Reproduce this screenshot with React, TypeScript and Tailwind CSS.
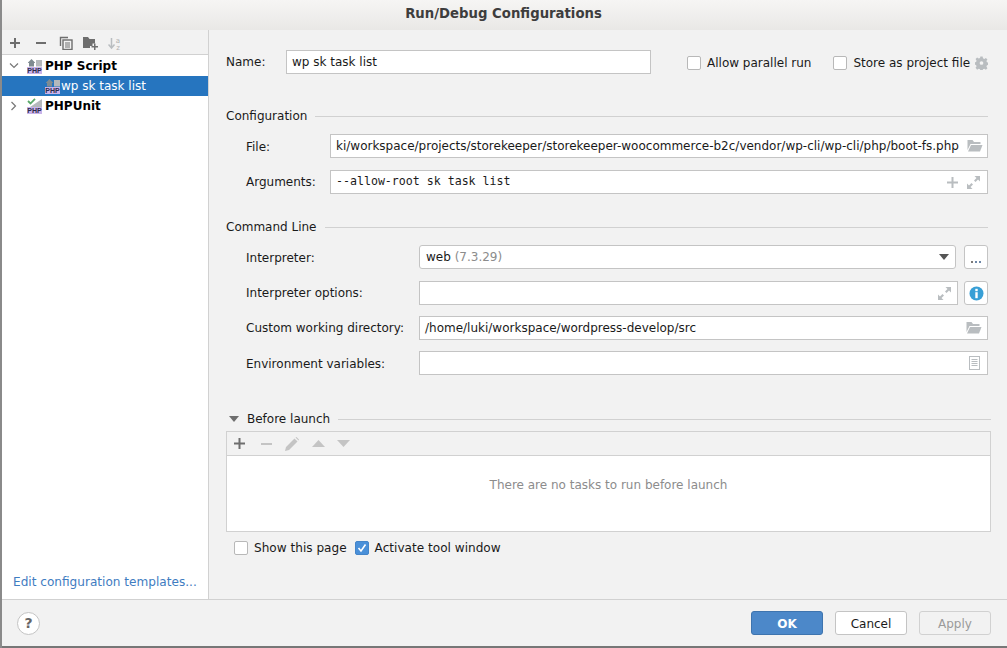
import React from "react";

const Php = ({ check }: { check?: boolean }) => (
  <svg width="16" height="16" viewBox="0 0 16 16" className="shrink-0">
    {check ? (
      <>
        <path d="M3 9 L15 1 V9 Z" fill="#b4b8bb" />
        <path d="M1 3 L3.5 5.5 L8 .8" fill="none" stroke="#59a869" strokeWidth="1.8" />
      </>
    ) : (
      <>
        <path d="M1 4.5 L4.5 1 L8 4.5 V5 H7 V8.5 H2 V5 H1 Z" fill="#7f8b91" />
        <rect x="9" y="2" width="6" height="6.5" fill="#b4b8bb" />
      </>
    )}
    <rect x="0" y="9" width="15" height="7" fill="#c9b3ea" />
    <text x="7.5" y="15" textAnchor="middle" fontSize="7" fontWeight="700" fill="#2b2b4a" fontFamily="Liberation Sans, sans-serif">PHP</text>
  </svg>
);

const Check = ({ on, label, className = "" }: { on?: boolean; label: string; className?: string }) => (
  <div className={"flex items-center gap-[6px] whitespace-nowrap shrink-0 " + className}>
    {on ? (
      <div className="w-[14px] h-[14px] rounded-[2px] bg-[#4a90d9] border border-[#4485c9] flex items-center justify-center">
        <svg width="10" height="10" viewBox="0 0 10 10"><path d="M1.5 5 L4 8 L8.5 1.5" fill="none" stroke="#fff" strokeWidth="1.6" /></svg>
      </div>
    ) : (
      <div className="w-[14px] h-[14px] rounded-[2px] bg-white border border-[#b8b8b8]" />
    )}
    <span>{label}</span>
  </div>
);

const Folder = () => (
  <svg width="16" height="12" viewBox="0 0 15 12" className="shrink-0">
    <path d="M0 0 H5 L6.5 2 H13 V4 H3 L0 10 Z" fill="#b9bdc0" />
    <path d="M3.5 5 H15 L12.5 11.5 H0.5 Z" fill="#b9bdc0" />
  </svg>
);

const Expand = () => (
  <svg width="13" height="13" viewBox="0 0 13 13" fill="#b9bdc0" className="shrink-0">
    <path d="M7.5 0 H13 V5.5 L11 3.5 L8.5 6 L7 4.5 L9.5 2 Z" />
    <path d="M0 7.5 V13 H5.5 L3.5 11 L6 8.5 L4.5 7 L2 9.5 Z" />
  </svg>
);

const Field = ({ children, className = "" }: { children?: React.ReactNode; className?: string }) => (
  <div className={"h-[24px] shrink-0 bg-white border border-[#c4c4c4] flex items-center px-[5px] whitespace-nowrap overflow-hidden " + className}>{children}</div>
);

const Section = ({ title }: { title: string }) => (
  <div className="flex items-center h-[18px]">
    <span>{title}</span>
    <div className="flex-1 h-px bg-[#d1d1d1] ml-[8px]" />
  </div>
);

const Row = ({ label, children, className = "", low }: { label: string; children: React.ReactNode; className?: string; low?: boolean }) => (
  <div className={"flex items-center pl-[20px] h-[24px] " + className}>
    <span className={low ? "w-[173px] shrink-0 pt-[2px]" : "w-[173px] shrink-0"}>{label}</span>
    {children}
  </div>
);

export default function App() {
  return (
    <div className="w-[1007px] h-[648px] flex flex-col overflow-hidden bg-[#f2f2f2] text-[#1a1a1a] text-[12px] border-l-2 border-[#8a8a8a]" style={{ fontFamily: '"DejaVu Sans", sans-serif' }}>
      <div className="h-[30px] shrink-0 flex items-center justify-center pb-[2px] font-bold text-[13.25px] text-[#3d3d3d] bg-gradient-to-b from-[#f6f5f4] to-[#e9e8e6] -ml-[2px]">Run/Debug Configurations</div>
      <div className="h-[569px] shrink-0 flex">
        <aside className="w-[207px] shrink-0 border-r border-[#d1d1d1] flex flex-col">
          <div className="h-[25px] shrink-0 flex items-center gap-[10px] pl-[7px] pt-[2px] text-[#6e6e6e] border-b border-[#d1d1d1]">
            <svg width="12" height="12" viewBox="0 0 12 12" fill="#6e6e6e"><path d="M5 1h2v4h4v2H7v4H5V7H1V5h4z" /></svg>
            <svg width="12" height="12" viewBox="0 0 12 12" fill="#6e6e6e" className="ml-[4px]"><rect x="1" y="5" width="10" height="2" /></svg>
            <svg width="14" height="14" viewBox="0 0 14 14" className="ml-[2px]" fill="none" stroke="#6e6e6e"><path d="M1.5 10V1.5H9" strokeWidth="1.4" /><rect x="4" y="4" width="9" height="9.5" strokeWidth="1.4" /><path d="M6 7h5M6 9h5M6 11h5" /></svg>
            <svg width="16" height="14" viewBox="0 0 16 14" fill="#6e6e6e"><path d="M0 1h5l1.5 2H12v4.5H9.5V10H7v2H0z" /><path d="M11 7.5h1.5V10H15v1.5h-2.5V14H11v-2.5H8.5V10H11z" /></svg>
            <svg width="14" height="15" viewBox="0 0 14 15" className="-ml-[1px]"><path d="M3.5 2v9M0.5 8.5 L3.5 12 L6.5 8.5" fill="none" stroke="#b9bdc0" strokeWidth="1.5" /><text x="10" y="6.5" fontSize="7" textAnchor="middle" fill="#b0b0b0">a</text><text x="10" y="14" fontSize="7" textAnchor="middle" fill="#b0b0b0">z</text></svg>
          </div>
          <div className="flex-1 bg-white flex flex-col pt-[1px]">
            <div className="h-[20px] flex items-center font-bold text-black">
              <svg width="10" height="8" viewBox="0 0 10 8" className="ml-[7px] mr-[8px]"><path d="M1 1.5 L5 5.5 L9 1.5" fill="none" stroke="#777" strokeWidth="1.2" /></svg>
              <Php />
              <span className="ml-[2px]">PHP Script</span>
            </div>
            <div className="h-[20px] flex items-center bg-[#2675bf] text-white pl-[43px]">
              <Php />
              <span className="whitespace-nowrap">wp sk task list</span>
            </div>
            <div className="h-[20px] flex items-center font-bold text-black">
              <svg width="8" height="10" viewBox="0 0 8 10" className="ml-[8px] mr-[9px]"><path d="M1.5 1 L5.5 5 L1.5 9" fill="none" stroke="#777" strokeWidth="1.2" /></svg>
              <Php check />
              <span className="ml-[2px]">PHPUnit</span>
            </div>
            <div className="flex-1" />
            <div className="pl-[11px] pb-[8px] text-[12.1px] text-[#3f7cc1] whitespace-nowrap">Edit configuration templates...</div>
          </div>
        </aside>
        <main className="flex-1 flex flex-col min-w-0 pt-[20px] pl-[17px] pr-[19px]">
          <div className="flex items-center h-[24px]">
            <span className="w-[60px] shrink-0">Name:</span>
            <Field className="w-[365px]">wp sk task list</Field>
            <Check label="Allow parallel run" className="ml-[36px] pt-[2px]" />
            <Check label="Store as project file" className="ml-[22px] pt-[2px]" />
            <svg width="13" height="14" viewBox="0 0 14 14" className="ml-[5px] mt-[2px] shrink-0" fill="#b9bdc0"><path fillRule="evenodd" d="M5.8 0h2.4l.4 2 1.4.6 1.7-1.1 1.7 1.7-1.1 1.7.6 1.4 2 .4v2.4l-2 .4-.6 1.4 1.1 1.7-1.7 1.7-1.7-1.1-1.4.6-.4 2H5.8l-.4-2-1.4-.6-1.7 1.1L.6 12.2l1.1-1.7-.6-1.4-2-.4V6.3l2-.4.6-1.4L.6 2.8l1.7-1.7L4 2.2l1.4-.6zM7 5a2 2 0 100 4 2 2 0 000-4z" /></svg>
          </div>
          <div className="mt-[33px]"><Section title="Configuration" /></div>
          <div className="flex items-center pl-[20px] h-[24px] mt-[9px]">
            <span className="w-[84px] shrink-0 pt-[2px]">File:</span>
            <Field className="w-[658px] !pr-[4px] justify-between">
              <span>ki/workspace/projects/storekeeper/storekeeper-woocommerce-b2c/vendor/wp-cli/wp-cli/php/boot-fs.php</span>
              <Folder />
            </Field>
          </div>
          <div className="flex items-center pl-[20px] h-[24px] mt-[12px]">
            <span className="w-[84px] shrink-0">Arguments:</span>
            <Field className="w-[658px] justify-between !pr-[7px]">
              <span style={{ fontFamily: '"DejaVu Sans Mono", monospace' }} className="text-[11.6px]">--allow-root sk task list</span>
              <span className="flex items-center gap-[9px]">
                <svg width="11" height="11" viewBox="0 0 11 11" fill="#b9bdc0"><path d="M4.5 0h2v4.5H11v2H6.5V11h-2V6.5H0v-2h4.5z" /></svg>
                <Expand />
              </span>
            </Field>
          </div>
          <div className="mt-[24px]"><Section title="Command Line" /></div>
          <Row label="Interpreter:" className="mt-[9px]" low>
            <Field className="w-[537px] rounded-[3px] justify-between !pl-[6px] !pr-[6px]">
              <span>web <span className="text-[#8c8c8c]">(7.3.29)</span></span>
              <svg width="10" height="6" viewBox="0 0 10 6" fill="#555"><path d="M0 0h10L5 6z" /></svg>
            </Field>
            <div className="w-[24px] h-[24px] shrink-0 ml-[8px] bg-white border border-[#c4c4c4] rounded-[3px] flex items-center justify-center pt-[10px]">
              <svg width="10" height="2" viewBox="0 0 10 2"><rect x="0" width="2" height="2" fill="#7d7a78" /><rect x="4" width="2" height="2" fill="#6f88a8" /><rect x="8" width="2" height="2" fill="#6f88a8" /></svg>
            </div>
          </Row>
          <Row label="Interpreter options:" className="mt-[12px]">
            <Field className="w-[539px] justify-end !pr-[6px]"><Expand /></Field>
            <div className="w-[24px] h-[24px] shrink-0 ml-[6px] bg-white border border-[#c4c4c4] rounded-[3px] flex items-center justify-center">
              <svg width="15" height="15" viewBox="0 0 15 15"><circle cx="7.5" cy="7.5" r="7" fill="#389fd6" /><rect x="6.3" y="2.8" width="2.4" height="2.4" fill="#fff" /><rect x="6.3" y="6.2" width="2.4" height="6" fill="#fff" /></svg>
            </div>
          </Row>
          <Row label="Custom working directory:" className="mt-[11px]">
            <Field className="w-[569px] justify-between !pr-[5px]">
              <span>/home/luki/workspace/wordpress-develop/src</span>
              <Folder />
            </Field>
          </Row>
          <Row label="Environment variables:" className="mt-[11px]" low>
            <Field className="w-[569px] justify-end !pr-[7px]">
              <svg width="11" height="14" viewBox="0 0 11 14"><rect x="0.5" y="0.5" width="10" height="13" fill="none" stroke="#b9bdc0" /><path d="M2.5 3.5h6M2.5 5.5h6M2.5 7.5h6M2.5 9.5h6" stroke="#b9bdc0" /></svg>
            </Field>
          </Row>
          <div className="flex items-center h-[18px] mt-[35px] pl-[3px]">
            <svg width="10" height="6" viewBox="0 0 10 6" fill="#6e6e6e" className="mr-[8px]"><path d="M0 0h10L5 6z" /></svg>
            <span>Before launch</span>
            <div className="flex-1 h-px bg-[#d1d1d1] ml-[8px] -mr-[3px]" />
          </div>
          <div className="h-[101px] mt-[3px] -mr-[3px] border border-[#d1d1d1] flex flex-col">
            <div className="h-[24px] shrink-0 border-b border-[#d1d1d1] flex items-center pl-[7px]">
              <svg width="11" height="11" viewBox="0 0 11 11" fill="#6e6e6e"><path d="M4.5 0h2v4.5H11v2H6.5V11h-2V6.5H0v-2h4.5z" /></svg>
              <svg width="11" height="2" viewBox="0 0 11 2" fill="#c4c4c4" className="ml-[16px]"><rect width="11" height="2" /></svg>
              <svg width="14" height="14" viewBox="0 0 14 14" fill="#c4c4c4" className="ml-[13px]"><path d="M0 14 L1 10 L9.5 1.5 L12.5 4.5 L4 13 Z M10.5 .5 L11.5 0 L14 2.5 L13.5 3.5 Z" /></svg>
              <svg width="13" height="7" viewBox="0 0 13 7" fill="#c4c4c4" className="ml-[13px]"><path d="M0 7 L6.5 0 L13 7 Z" /></svg>
              <svg width="13" height="7" viewBox="0 0 13 7" fill="#c4c4c4" className="ml-[12px]"><path d="M0 0 L6.5 7 L13 0 Z" /></svg>
            </div>
            <div className="flex-1 bg-white flex items-center justify-center text-[#8c8c8c] pb-[17px]">There are no tasks to run before launch</div>
          </div>
          <div className="flex items-center h-[18px] mt-[7px] pl-[8px] gap-[8px] text-[12.1px]">
            <Check label="Show this page" />
            <Check on label="Activate tool window" />
          </div>
        </main>
      </div>
      <footer className="h-[47px] shrink-0 border-t border-[#d1d1d1] flex items-center pl-[15px] pr-[16px]">
        <div className="w-[23px] h-[23px] rounded-full bg-white border border-[#c4c4c4] flex items-center justify-center font-bold text-[#666] text-[14px]">?</div>
        <div className="flex-1" />
        <button className="w-[72px] h-[24px] pt-[1px] rounded-[3px] bg-[#4c88c9] border border-[#3e74ae] text-white font-bold">OK</button>
        <button className="w-[72px] h-[24px] pt-[1px] ml-[12px] rounded-[3px] bg-white border border-[#c4c4c4]">Cancel</button>
        <button className="w-[72px] h-[24px] pt-[1px] ml-[12px] rounded-[3px] border border-[#d1d1d1] text-[#9a9a9a]">Apply</button>
      </footer>
      <div className="h-[2px] bg-[#777] shrink-0 -ml-[2px]" />
    </div>
  );
}
